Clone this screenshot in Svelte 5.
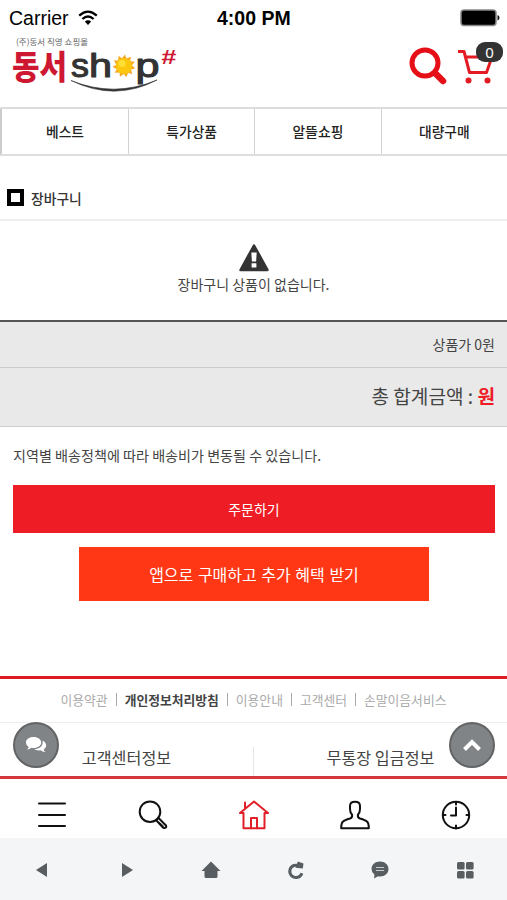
<script lang="ts">
	const categories = ['베스트', '특가상품', '알뜰쇼핑', '대량구매'];

	const links = [
		{ label: '이용약관' },
		{ label: '개인정보처리방침', strong: true },
		{ label: '이용안내' },
		{ label: '고객센터' },
		{ label: '손말이음서비스' }
	];

	const rays = Array.from({ length: 11 }, (_, i) => i * 32.7);

	let cartCount = $state(0);
</script>

<div class="screen">
	<div class="status">
		<span class="carrier">Carrier</span>
		<svg class="wifi" width="20" height="16" viewBox="0 0 20 16" fill="none" stroke="#000" stroke-width="2.3">
			<path d="M1.2 5.6Q10 -2.4 18.8 5.6" />
			<path d="M4.4 9Q10 4 15.6 9" />
			<path d="M6.8 11.6Q10 9 13.2 11.6L10 15Z" fill="#000" stroke="none" />
		</svg>
		<span class="time">4:00 PM</span>
		<svg class="battery" width="40" height="18" viewBox="0 0 40 18">
			<rect x="1" y="1" width="35" height="15.5" rx="3" fill="#000" stroke="#888" stroke-width="1.5" />
			<path d="M37.5 6q2 .6 2 2.8t-2 2.8z" fill="#111" />
		</svg>
	</div>

	<header>
		<svg class="logo" width="170" height="60" viewBox="0 0 170 60">
			<text class="tag" x="5" y="8.500" textLength="72" lengthAdjust="spacingAndGlyphs">(주)동서 직영 쇼핑몰</text>
			<text class="ko" x="1" y="43" textLength="55" lengthAdjust="spacingAndGlyphs">동서</text>
			<text class="en" x="60" y="40.500" textLength="18" lengthAdjust="spacingAndGlyphs">s</text>
			<text class="en" x="78" y="40.500" textLength="23" lengthAdjust="spacingAndGlyphs">h</text>
			<g transform="translate(113 30)">
				{#each rays as r}
					<path d="M-2.6 -7L1 -11.5L2.6 -7Z" fill="#f6a821" transform="rotate({r})" />
				{/each}
				<circle r="8" fill="#fcc70d" />
				<circle cx="-2" cy="-2.5" r="3.6" fill="#ffdf35" />
			</g>
			<text class="en" x="124.500" y="40.500" textLength="24" lengthAdjust="spacingAndGlyphs">p</text>
			<text class="hash" x="150" y="28" textLength="15" lengthAdjust="spacingAndGlyphs">#</text>
			<path d="M60 44.500Q103 62 146 44Q104 66 60 44.500Z" fill="#333" stroke="#333" stroke-width=".6" />
		</svg>
		<svg class="find" width="38" height="38" viewBox="0 0 38 38" fill="none" stroke="#e60f18">
			<circle cx="16" cy="16" r="13" stroke-width="5" />
			<path d="M26 26L34 34" stroke-width="6.500" stroke-linecap="round" />
		</svg>
		<div class="cart">
			<svg width="38" height="36" viewBox="0 0 38 36" fill="none" stroke="#e31b23" stroke-width="3">
				<path d="M0 3.500H6L11.500 24.500H28.500L34 9H8" stroke-linejoin="round" />
				<circle cx="10.500" cy="32.500" r="3" fill="#e31b23" stroke="none" />
				<circle cx="29.500" cy="32.500" r="3" fill="#e31b23" stroke="none" />
			</svg>
			<span class="badge">{cartCount}</span>
		</div>
	</header>

	<nav class="categories">
		{#each categories as name}
			<span class="category">{name}</span>
		{/each}
	</nav>

	<h1><span class="square"></span>장바구니</h1>

	<section class="empty">
		<svg width="30" height="28" viewBox="0 0 30 28">
			<path d="M15 1.500L28.500 26H1.500Z" fill="#333" stroke="#333" stroke-width="2.500" stroke-linejoin="round" />
			<path d="M12.300 8.500h5.400l-.6 9h-4.200zM12.600 19.300h4.800v4.200h-4.800z" fill="#fff" />
		</svg>
		<p>장바구니 상품이 없습니다.</p>
	</section>

	<div class="subtotal">상품가 {cartCount}원</div>
	<div class="total">총 합계금액 :&nbsp;<b>원</b></div>
	<p class="notice">지역별 배송정책에 따라 배송비가 변동될 수 있습니다.</p>
	<button class="order">주문하기</button>
	<button class="app-order">앱으로 구매하고 추가 혜택 받기</button>

	<footer>
		<div class="links">
			{#each links as link, i}
				{#if i > 0}<i></i>{/if}
				<span class:strong={link.strong}>{link.label}</span>
			{/each}
		</div>
		<div class="info">
			<span>고객센터정보</span>
			<span>무통장 입금정보</span>
			<div class="round chat">
				<svg width="22" height="18" viewBox="0 0 22 18" fill="#fff">
					<path d="M17.500 4.500C22 7 22.400 11 18.700 13.400q.3 1.700 1.800 2.700-2.900.1-5-1.800-4 .6-6.500-1.300C15 12.800 18.500 9.500 17.500 4.500Z" />
					<path d="M8.500 1C4 1 1 3.400 1 6.500c0 1.800 1 3.400 2.700 4.400Q3.200 12.500 1.900 13.500q2.700-.1 4.600-1.700 1 .2 2 .2c4.500 0 7.700-2.400 7.700-5.500S13 1 8.500 1Z" />
				</svg>
			</div>
			<div class="round top">
				<svg width="20" height="14" viewBox="0 0 20 14" fill="none" stroke="#fff" stroke-width="4">
					<path d="M2.500 11.500L10 4L17.500 11.500" />
				</svg>
			</div>
		</div>
	</footer>

	<nav class="tabs">
		<svg width="30" height="30" viewBox="0 0 30 30"><path d="M2 3.500H28M2 15H28M2 26H28" /></svg>
		<svg width="30" height="30" viewBox="0 0 30 30">
			<circle cx="12" cy="11.700" r="10.300" />
			<path d="M18 20L20.500 18L28 25.500Q29 27.500 26.500 28Q25.500 28.200 24.500 27Z" />
			<path d="M21.500 22.500L25.500 26" stroke-width="1" />
		</svg>
		<svg class="active" width="30" height="30" viewBox="0 0 30 30">
			<path d="M1 13L15 1.500L29 13M6 8V2.500M1 13H4.500V28.200H12V18H18V28.200H25.500V13H29" />
			<path d="M12 28.200H18" />
		</svg>
		<svg width="30" height="30" viewBox="0 0 30 30">
			<path d="M12 14.500Q10 12.500 10 9V6Q10 1.700 15 1.700Q20 1.700 20 6V9Q20 12.500 18 14.500Q17.200 17.500 20 18.500Q25.500 20.200 27 21.600Q28.800 23 28.800 28.200H1.200Q1.200 23 3 21.600Q4.500 20.200 10 18.500Q12.800 17.500 12 14.500Z" />
		</svg>
		<svg width="30" height="30" viewBox="0 0 30 30">
			<circle cx="15" cy="15" r="13.200" />
			<path d="M15 7.500V15.500H10M15 2V4.500M15 25.500V28.500M2 15H4.500M25.500 15H28" />
		</svg>
	</nav>

	<nav class="browser">
		<svg width="22" height="20" viewBox="0 0 22 20"><path d="M5 10L16 3V17Z" /></svg>
		<svg width="22" height="20" viewBox="0 0 22 20"><path d="M17 10L6 3V17Z" /></svg>
		<svg width="22" height="20" viewBox="0 0 22 20"><path d="M11 1.500L20.500 11H17.500V16.500Q17.500 18 16 18H6Q4.500 18 4.500 16.500V11H1.500Z" /></svg>
		<svg width="22" height="20" viewBox="0 0 22 20">
			<path d="M13.500 5.800Q11.500 4.800 8.800 5.500A6.200 6.200 0 1 0 16.900 13.200" fill="none" stroke="#575d60" stroke-width="3" />
			<path d="M12.800 1.500L18.500 3.500L17.800 8.500L10.500 7.800Z" />
		</svg>
		<svg width="22" height="20" viewBox="0 0 22 20">
			<path d="M11 1.500C6 1.500 2.500 4.700 2.500 9Q2.500 12.500 5.500 14.800L5 18.500L9 16.300Q10 16.500 11 16.500C16 16.500 19.500 13.300 19.500 9S16 1.500 11 1.500Z" />
			<path d="M7 7.500H15M7 10.500H15" stroke="#c9cccd" stroke-width="1.200" />
		</svg>
		<svg width="22" height="20" viewBox="0 0 22 20">
			<rect x="3" y="2" width="7.600" height="7.500" rx="1.500" /><rect x="12" y="2" width="7.600" height="7.500" rx="1.500" />
			<rect x="3" y="11" width="7.600" height="7.500" rx="1.500" /><rect x="12" y="11" width="7.600" height="7.500" rx="1.500" />
		</svg>
	</nav>
</div>

<style>
	:global(body) {
		margin: 0;
		background: #fff;
	}

	.screen {
		display: flex;
		flex-direction: column;
		width: 507px;
		height: 900px;
		overflow: hidden;
		background: #fff;
		color: #444;
		font: 14px/20px 'Noto Sans CJK KR', sans-serif;
	}

	.screen * {
		box-sizing: border-box;
	}

	svg {
		display: block;
		flex: none;
	}

	.status {
		display: grid;
		grid-template-columns: 60px 130px 1fr 40px;
		align-items: center;
		gap: 9px;
		height: 36px;
		padding: 0 7px 0 9px;
		color: #000;
		font: 19.5px/36px 'Liberation Sans', sans-serif;
	}

	.time {
		font-weight: 700;
	}

	header {
		display: flex;
		align-items: flex-start;
		height: 71px;
		padding: 0 11px;
	}

	.tag {
		font-size: 8.5px;
		fill: #666;
	}

	.ko {
		font-size: 33px;
		font-weight: 900;
		fill: #ce1831;
	}

	.en {
		font: 34px 'Liberation Sans', sans-serif;
		fill: #333;
		stroke: #333;
		stroke-width: 1.1px;
		stroke-linejoin: round;
	}

	.hash {
		font: italic 600 20px 'Liberation Sans', sans-serif;
		fill: #ce1831;
	}

	.find {
		margin: 11px 11px 0 auto;
	}

	.cart {
		position: relative;
		width: 38px;
		margin-top: 12px;
	}

	.badge {
		position: absolute;
		top: -6px;
		right: -7px;
		width: 27px;
		height: 20px;
		border-radius: 9px;
		background: #333;
		color: #fff;
		font: 15px/20px 'Noto Sans', sans-serif;
		text-align: center;
	}

	.categories {
		display: grid;
		grid-template-columns: 128px repeat(3, 1fr);
		height: 49px;
		border: solid #ddd;
		border-width: 2px 0;
	}

	.category {
		display: flex;
		align-items: center;
		justify-content: center;
		border-left: 1px solid #d2d2d2;
		color: #222;
		font-size: 13.8px;
		font-weight: 500;
	}

	.category:first-child {
		border-left: 2px solid #ccc;
	}

	h1 {
		display: flex;
		align-items: center;
		gap: 7px;
		height: 65px;
		margin: 0;
		padding: 21px 0 0 7px;
		border-bottom: 2px solid #eee;
		color: #333;
		font-size: 13.8px;
		font-weight: 500;
	}

	.square {
		width: 17px;
		height: 17px;
		border: 4px solid #000;
	}

	.empty {
		display: flex;
		flex-direction: column;
		align-items: center;
		height: 99px;
		padding-top: 23px;
	}

	.empty p {
		margin: 2px 0 0;
	}

	.subtotal,
	.total {
		display: flex;
		align-items: center;
		justify-content: flex-end;
		padding-right: 12px;
		background: #e9e9e9;
		border-bottom: 1px solid #ccc;
	}

	.subtotal {
		height: 49px;
		border-top: 2px solid #555;
	}

	.total {
		height: 59px;
		padding-bottom: 3px;
		font-size: 19.1px;
	}

	.total b {
		color: #ee1c25;
	}

	.notice {
		height: 58px;
		margin: 0;
		padding: 18px 13px 0;
		font-size: 14.1px;
	}

	button {
		flex: none;
		border: 0;
		padding: 0;
		color: #fff;
		font-family: inherit;
	}

	.order {
		height: 48px;
		margin: 0 12px 0 13px;
		background: #ee1c25;
		font-size: 14px;
	}

	.app-order {
		width: 350px;
		height: 54px;
		margin: 14px 0 0 79px;
		background: #ff3715;
		font-size: 16px;
		word-spacing: 1px;
	}

	footer {
		height: 103px;
		margin-top: 75px;
		border-top: 3px solid #dc1b25;
		border-bottom: 3px solid #d4373d;
	}

	.links {
		display: flex;
		align-items: center;
		justify-content: center;
		gap: 8px;
		height: 44px;
		padding-bottom: 2px;
		border-bottom: 1px solid #eee;
		color: #aaa;
		font-size: 12.8px;
	}

	.links i {
		width: 1px;
		height: 13px;
		background: #aaa;
	}

	.strong {
		color: #444;
		font-weight: 700;
	}

	.info {
		position: relative;
		display: grid;
		grid-template-columns: 253px 1fr;
		height: 53px;
		padding-top: 24px;
		font-size: 16.2px;
		text-align: center;
	}

	.info span {
		line-height: 20px;
	}

	.info span + span {
		border-left: 1px solid #e5e5e5;
	}

	.round {
		position: absolute;
		top: -1px;
		display: flex;
		align-items: center;
		justify-content: center;
		width: 46px;
		height: 46px;
		border: 2px solid #626466;
		border-radius: 50%;
		background: #808487;
	}

	.chat {
		left: 13px;
	}

	.top {
		right: 12px;
	}

	.tabs {
		display: grid;
		grid-template-columns: repeat(5, 1fr);
		place-items: center;
		height: 59px;
		padding: 13px 0 0 1px;
	}

	.tabs svg {
		fill: none;
		stroke: #111;
		stroke-width: 2;
		stroke-linecap: round;
		stroke-linejoin: round;
	}

	.tabs .active {
		stroke: #e11f29;
	}

	.browser {
		display: grid;
		grid-template-columns: repeat(6, 1fr);
		place-items: center;
		height: 62px;
		padding-top: 2px;
		background: #f4f5f6;
		fill: #575d60;
	}
</style>
